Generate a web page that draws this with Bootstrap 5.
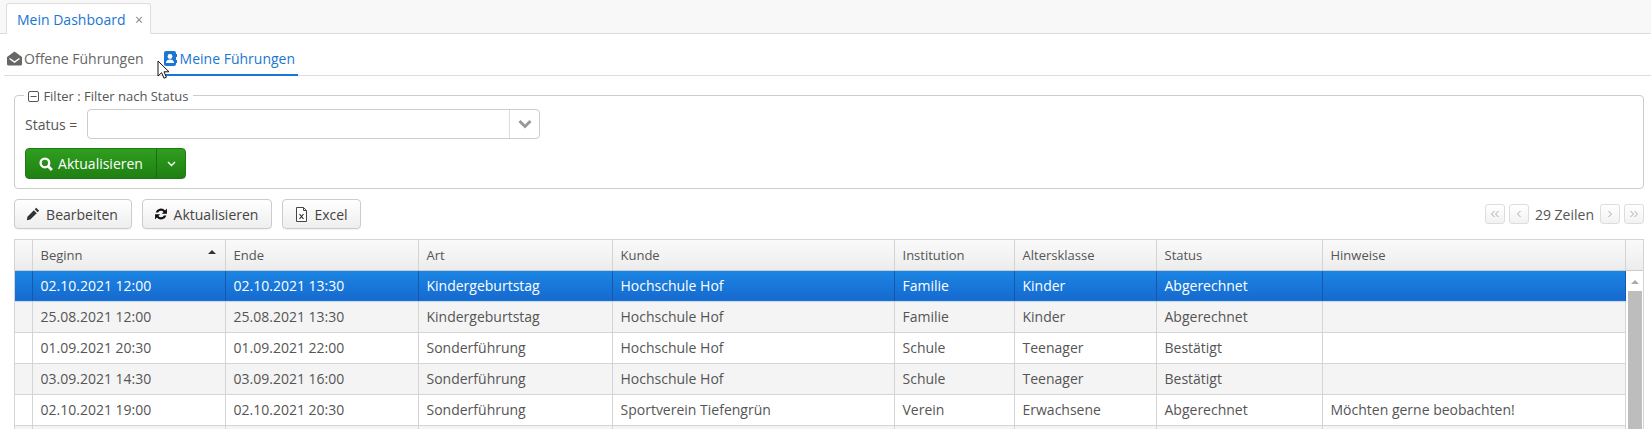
<!DOCTYPE html>
<html lang="de">
<head>
<meta charset="utf-8">
<title>Mein Dashboard</title>
<link href="https://cdn.jsdelivr.net/npm/bootstrap@5.3.0/dist/css/bootstrap.min.css" rel="stylesheet">
<style>
html,body{height:429px;overflow:hidden}
body{font-family:"Open Sans",sans-serif;font-size:14px;color:#555;background:#fff;position:relative}
.tabbar{height:34px;background:#f8f8f8;border-bottom:1px solid #ddd;padding:3px 0 0 6px}
.maintab{height:31px;width:145px;background:#fff;border:1px solid #ddd;border-bottom:0;border-radius:3px 3px 0 0;color:#1976d2;padding:0 7px 0 10px;justify-content:space-between;font-size:14px}
.maintab .closex{color:#888;font-size:14px}
.subtabs{height:42px;margin-left:4px;border-bottom:1px solid #ddd;padding-left:3px}
.subtab{height:42px;font-size:14px;color:#666;padding-top:15px;line-height:20px;white-space:nowrap}
.subtab svg{margin-right:2px;vertical-align:-2px}
.subtab.sel{color:#1976d2;border-bottom:2px solid #1976d2;margin-left:19px;width:135px;padding-left:1px}
.filterbox{margin:19px 7px 0 14px;height:94px;border:1px solid #ccc;border-radius:4px;padding:13px 10px 0;position:relative}
.legendtxt{position:absolute;left:9px;top:-9px;background:#fff;padding:0 4px;line-height:18px;font-size:13px;color:#555}
.legendtxt svg{vertical-align:-1px;margin-right:1px}
.statusrow{height:30px}
.statuslbl{width:62px;font-size:14px}
.combo{width:453px;height:30px;border:1px solid #ccc;border-radius:4px;background:#fff}
.combo .fillarea{flex:1}
.combo .arrowarea{width:30px;border-left:1px solid #ddd}
.greengrp{margin-top:9px;height:31px;width:161px;border:1px solid #1e7a14;border-radius:4px;background:linear-gradient(#2f9e1f,#1f8012);color:#fff;font-size:14px}
.greengrp .mainpart{width:131px;height:100%;border-right:1px solid #1a6e10;gap:5px}
.greengrp .caretpart{flex:1}
.toolbar{margin:10px 7px 0 14px;height:30px}
.toolbtn{height:30px;border:1px solid #ccc;border-radius:4px;background:linear-gradient(#fff,#eee);color:#444;font-size:14px;padding:0;gap:6px;box-shadow:0 1px 1px rgba(0,0,0,.05)}
.wbearb{width:118px;margin-right:10px;padding-right:2px}
.wakt{width:130px;margin-right:10px;padding-right:2px}
.wexcel{width:79px}
.pagerbtn{width:20px;height:20px;border:1px solid #ddd;border-radius:3px;background:linear-gradient(#fff,#f2f2f2);padding:0;color:#aaa}
.pagertxt{font-size:14px;color:#555;margin:0 6px 0 6px}
.gridwrap{margin:10px 7px 0 14px;height:200px;overflow:hidden;border:1px solid #d4d4d4;border-bottom:0}
table.datagrid{table-layout:fixed;width:1629px;border-collapse:collapse;margin:0;font-size:14px;color:#555}
.datagrid th{font-weight:400;height:30px;font-size:13px;padding:1px 8px 0;background:linear-gradient(#fafafa,#ececec);border-right:1px solid #d4d4d4;border-bottom:1px solid #ccc;position:relative;white-space:nowrap}
.datagrid td{height:31px;padding:0 8px;border-right:1px solid #d4d4d4;border-bottom:1px solid #d4d4d4;white-space:nowrap;overflow:hidden}
.datagrid tr.alt td{background:#f4f4f4}
.datagrid tr.sel td{background:linear-gradient(#1b86e3,#1669cf);color:#fff;border-right-color:#1459ad;border-bottom-color:#c9d6e6}
.datagrid th.edge,.datagrid td.edge{padding:0}
.datagrid tr.sel td.scrollcell{padding:0;background:#fff;border:0;vertical-align:top}
.datagrid th:last-child{border-right:0}
.sortmark{position:absolute;right:9px;top:10px;width:0;height:0;border-left:4px solid transparent;border-right:4px solid transparent;border-bottom:4px solid #333}
.sbar{padding:9px 2px 0 2px;height:160px}
.sbar .uptri{width:0;height:0;margin:0 auto 7px;border-left:4px solid transparent;border-right:4px solid transparent;border-bottom:4px solid #aaa}
.sbar .thumbbar{height:150px;background:#bdbdbd}
.mouseptr{position:absolute;left:157px;top:60px}
</style>
</head>
<body>
<div class="tabbar">
  <div class="maintab d-flex align-items-center"><span>Mein Dashboard</span><span class="closex">×</span></div>
</div>
<div class="subtabs d-flex">
  <div class="subtab"><svg width="15" height="15" viewBox="0 0 15 15"><path fill="#666" d="M7.500 .5 15 6v7a1.500 1.500 0 0 1-1.500 1.500h-12A1.500 1.500 0 0 1 0 13V6z"/><path fill="none" stroke="#fff" stroke-width="1.400" d="M2.500 7.500l5 3.600 5-3.600"/></svg>Offene Führungen</div>
  <div class="subtab sel"><svg width="13" height="15" viewBox="0 0 13 15" style="margin-right:3px"><rect x="0" y="0" width="12" height="15" rx="2" fill="#1976d2"/><rect x="12" y="3" width="1" height="3" fill="#1976d2"/><rect x="12" y="9" width="1" height="3" fill="#1976d2"/><circle cx="6" cy="5.500" r="2.400" fill="#fff"/><path d="M2 12c0-2.600 1.800-3.600 4-3.600s4 1 4 3.600z" fill="#fff"/></svg>Meine Führungen</div>
</div>
<div class="filterbox">
  <div class="legendtxt"><svg width="11" height="11" viewBox="0 0 11 11"><rect x=".5" y=".5" width="10" height="10" rx="1.500" fill="none" stroke="#555"/><path d="M2.500 5.500h6" stroke="#555"/></svg> Filter : Filter nach Status</div>
  <div class="statusrow d-flex align-items-center">
    <div class="statuslbl">Status =</div>
    <div class="combo d-flex">
      <div class="fillarea"></div>
      <div class="arrowarea d-flex align-items-center justify-content-center"><svg width="14" height="10" viewBox="0 0 14 10"><path d="M1.500 2 7 7.500 12.500 2" fill="none" stroke="#999" stroke-width="3"/></svg></div>
    </div>
  </div>
  <div class="greengrp d-flex align-items-center">
    <div class="mainpart d-flex align-items-center justify-content-center"><svg width="14" height="14" viewBox="0 0 13 13"><circle cx="5.500" cy="5.500" r="4" fill="none" stroke="#fff" stroke-width="2.200"/><path d="M8.500 8.500 12 12" stroke="#fff" stroke-width="2.600"/></svg><span>Aktualisieren</span></div>
    <div class="caretpart d-flex align-items-center justify-content-center"><svg width="9" height="6" viewBox="0 0 9 6"><path d="M1 1l3.500 3.500L8 1" fill="none" stroke="#fff" stroke-width="1.400"/></svg></div>
  </div>
</div>
<div class="toolbar d-flex align-items-center">
  <button class="btn toolbtn wbearb d-flex align-items-center justify-content-center"><svg width="14" height="14" viewBox="0 0 13 13"><path d="M9.500.8l2.700 2.700-1.400 1.400-2.700-2.700zM7.300 3l2.700 2.700-6 6L.8 12.200l.5-3.200z" fill="#333"/></svg>Bearbeiten</button>
  <button class="btn toolbtn wakt d-flex align-items-center justify-content-center"><svg width="14" height="14" viewBox="0 0 13 13"><path d="M1.500 5.200A5.100 5.100 0 0 1 10.300 3.200L12 1.500V6.300H7.200l1.700-1.700A3 3 0 0 0 3.800 5.200zM11.500 7.800A5.100 5.100 0 0 1 2.700 9.800L1 11.500V6.700h4.800L4.100 8.400a3 3 0 0 0 5.100-.6z" fill="#111"/></svg>Aktualisieren</button>
  <button class="btn toolbtn wexcel d-flex align-items-center justify-content-center"><svg width="13" height="15" viewBox="0 0 13 15"><path d="M1.500.5H8.500L11.500 3.500V14.500H1.500z" fill="#fff" stroke="#444"/><path d="M8.500.5V3.500H11.500" fill="none" stroke="#444"/><path d="M4.500 7l4 5M8.500 7l-4 5" stroke="#222" stroke-width="1.100"/></svg>Excel</button>
  <div class="ms-auto d-flex align-items-center">
    <button class="btn pagerbtn d-flex align-items-center justify-content-center me-1"><svg width="10" height="8" viewBox="0 0 10 8"><path d="M4.500 1 1.500 4l3 3M8.500 1l-3 3 3 3" fill="none" stroke="#aaa"/></svg></button>
    <button class="btn pagerbtn d-flex align-items-center justify-content-center"><svg width="6" height="8" viewBox="0 0 6 8"><path d="M4.500 1 1.500 4l3 3" fill="none" stroke="#aaa"/></svg></button>
    <span class="pagertxt">29 Zeilen</span>
    <button class="btn pagerbtn d-flex align-items-center justify-content-center me-1"><svg width="6" height="8" viewBox="0 0 6 8"><path d="M1.500 1l3 3-3 3" fill="none" stroke="#aaa"/></svg></button>
    <button class="btn pagerbtn d-flex align-items-center justify-content-center"><svg width="10" height="8" viewBox="0 0 10 8"><path d="M1.500 1l3 3-3 3M5.500 1l3 3-3 3" fill="none" stroke="#aaa"/></svg></button>
  </div>
</div>
<div class="gridwrap">
<table class="datagrid">
  <colgroup><col style="width:17px"><col style="width:193px"><col style="width:193px"><col style="width:194px"><col style="width:282px"><col style="width:120px"><col style="width:142px"><col style="width:166px"><col style="width:303px"><col style="width:19px"></colgroup>
  <thead><tr><th class="edge"></th><th>Beginn<span class="sortmark"></span></th><th>Ende</th><th>Art</th><th>Kunde</th><th>Institution</th><th>Altersklasse</th><th>Status</th><th>Hinweise</th><th class="edge"></th></tr></thead>
  <tbody>
    <tr class="sel"><td class="edge"></td><td>02.10.2021 12:00</td><td>02.10.2021 13:30</td><td>Kindergeburtstag</td><td>Hochschule Hof</td><td>Familie</td><td>Kinder</td><td>Abgerechnet</td><td></td><td class="scrollcell" rowspan="6"><div class="sbar"><div class="uptri"></div><div class="thumbbar"></div></div></td></tr>
    <tr class="alt"><td class="edge"></td><td>25.08.2021 12:00</td><td>25.08.2021 13:30</td><td>Kindergeburtstag</td><td>Hochschule Hof</td><td>Familie</td><td>Kinder</td><td>Abgerechnet</td><td></td></tr>
    <tr><td class="edge"></td><td>01.09.2021 20:30</td><td>01.09.2021 22:00</td><td>Sonderführung</td><td>Hochschule Hof</td><td>Schule</td><td>Teenager</td><td>Bestätigt</td><td></td></tr>
    <tr class="alt"><td class="edge"></td><td>03.09.2021 14:30</td><td>03.09.2021 16:00</td><td>Sonderführung</td><td>Hochschule Hof</td><td>Schule</td><td>Teenager</td><td>Bestätigt</td><td></td></tr>
    <tr><td class="edge"></td><td>02.10.2021 19:00</td><td>02.10.2021 20:30</td><td>Sonderführung</td><td>Sportverein Tiefengrün</td><td>Verein</td><td>Erwachsene</td><td>Abgerechnet</td><td>Möchten gerne beobachten!</td></tr>
    <tr class="alt"><td class="edge"></td><td></td><td></td><td></td><td></td><td></td><td></td><td></td><td></td></tr>
  </tbody>
</table>
</div>
<svg class="mouseptr" width="14" height="20" viewBox="0 0 14 20"><path d="M1 1v15l3.600-3.300 2.400 5.500 2.400-1-2.400-5.400H12z" fill="#fff" stroke="#111" stroke-width="1"/></svg>
<script src="https://cdn.jsdelivr.net/npm/bootstrap@5.3.0/dist/js/bootstrap.bundle.min.js"></script>
</body>
</html>
